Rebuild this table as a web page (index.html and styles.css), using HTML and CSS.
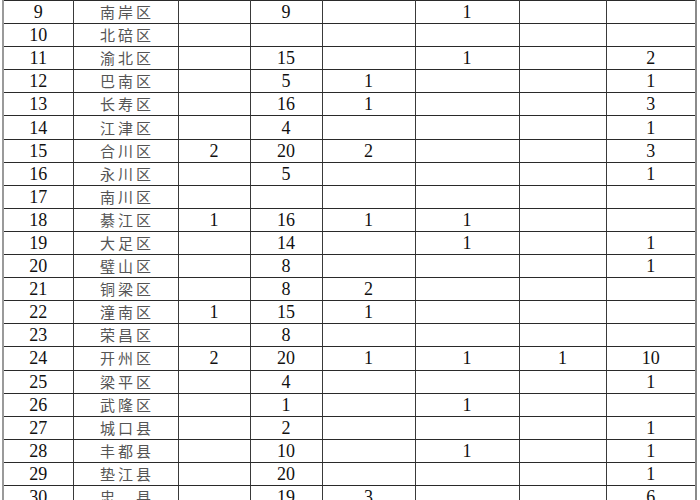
FILE: index.html
```html
<!DOCTYPE html>
<html lang="zh">
<head>
<meta charset="utf-8">
<title>区县统计表</title>
<link rel="stylesheet" href="styles.css">
</head>
<body>
<div class="page">
<table class="stats">
<colgroup>
<col class="w-num"><col class="w-name"><col class="w-c3"><col class="w-c4"><col class="w-c5"><col class="w-c6"><col class="w-c7"><col class="w-c8">
</colgroup>
<tbody>
<tr><td>9</td><td class="name">南岸区</td><td></td><td>9</td><td></td><td>1</td><td></td><td></td></tr>
<tr><td>10</td><td class="name">北碚区</td><td></td><td></td><td></td><td></td><td></td><td></td></tr>
<tr><td>11</td><td class="name">渝北区</td><td></td><td>15</td><td></td><td>1</td><td></td><td>2</td></tr>
<tr><td>12</td><td class="name">巴南区</td><td></td><td>5</td><td>1</td><td></td><td></td><td>1</td></tr>
<tr><td>13</td><td class="name">长寿区</td><td></td><td>16</td><td>1</td><td></td><td></td><td>3</td></tr>
<tr><td>14</td><td class="name">江津区</td><td></td><td>4</td><td></td><td></td><td></td><td>1</td></tr>
<tr><td>15</td><td class="name">合川区</td><td>2</td><td>20</td><td>2</td><td></td><td></td><td>3</td></tr>
<tr><td>16</td><td class="name">永川区</td><td></td><td>5</td><td></td><td></td><td></td><td>1</td></tr>
<tr><td>17</td><td class="name">南川区</td><td></td><td></td><td></td><td></td><td></td><td></td></tr>
<tr><td>18</td><td class="name">綦江区</td><td>1</td><td>16</td><td>1</td><td>1</td><td></td><td></td></tr>
<tr><td>19</td><td class="name">大足区</td><td></td><td>14</td><td></td><td>1</td><td></td><td>1</td></tr>
<tr><td>20</td><td class="name">璧山区</td><td></td><td>8</td><td></td><td></td><td></td><td>1</td></tr>
<tr><td>21</td><td class="name">铜梁区</td><td></td><td>8</td><td>2</td><td></td><td></td><td></td></tr>
<tr><td>22</td><td class="name">潼南区</td><td>1</td><td>15</td><td>1</td><td></td><td></td><td></td></tr>
<tr><td>23</td><td class="name">荣昌区</td><td></td><td>8</td><td></td><td></td><td></td><td></td></tr>
<tr><td>24</td><td class="name">开州区</td><td>2</td><td>20</td><td>1</td><td>1</td><td>1</td><td>10</td></tr>
<tr><td>25</td><td class="name">梁平区</td><td></td><td>4</td><td></td><td></td><td></td><td>1</td></tr>
<tr><td>26</td><td class="name">武隆区</td><td></td><td>1</td><td></td><td>1</td><td></td><td></td></tr>
<tr><td>27</td><td class="name">城口县</td><td></td><td>2</td><td></td><td></td><td></td><td>1</td></tr>
<tr><td>28</td><td class="name">丰都县</td><td></td><td>10</td><td></td><td>1</td><td></td><td>1</td></tr>
<tr><td>29</td><td class="name">垫江县</td><td></td><td>20</td><td></td><td></td><td></td><td>1</td></tr>
<tr><td>30</td><td class="name">忠&#12288;县</td><td></td><td>19</td><td>3</td><td></td><td></td><td>6</td></tr>
</tbody>
</table>
</div>
</body>
</html>
```

FILE: styles.css
```css
html, body {
  margin: 0;
  padding: 0;
  background: #ffffff;
}

.page {
  padding: 0 0 0 2px;
  width: 700px;
  height: 500px;
  overflow: hidden;
  box-sizing: border-box;
}

.stats {
  border-collapse: collapse;
  table-layout: fixed;
  width: 693px;
  font-family: "Liberation Serif", "Times New Roman", serif;
  font-size: 18px;
  color: #111111;
}

.w-num { width: 70px; }
.w-name { width: 105px; }
.w-c3 { width: 72px; }
.w-c4 { width: 72px; }
.w-c5 { width: 93px; }
.w-c6 { width: 104px; }
.w-c7 { width: 87px; }
.w-c8 { width: 90px; }

.stats td {
  height: 22.1px;
  padding: 0;
  text-align: center;
  vertical-align: middle;
  line-height: 20px;
  border-top: 1px solid #2a2a2a;
  border-bottom: 1px solid #2a2a2a;
  border-left: 1px solid #3a3a3a;
  border-right: 1px solid #3a3a3a;
  white-space: nowrap;
}

.stats td:nth-child(1) { border-left: 2px solid #9a9a9a; }
.stats td:nth-child(3) { border-left-color: #8a8a8a; }
.stats td:nth-child(5) { border-left-color: #555555; }
.stats td:nth-child(6) { border-left-color: #777777; }
.stats td:nth-child(8) { border-left-color: #8a8a8a; border-right: 2px solid #8a8a8a; }

.stats td.name {
  font-family: "Noto Sans CJK SC", "Noto Sans", sans-serif;
  font-size: 15px;
  letter-spacing: 3px;
  padding-left: 3px;
  color: #555555;
}
```
